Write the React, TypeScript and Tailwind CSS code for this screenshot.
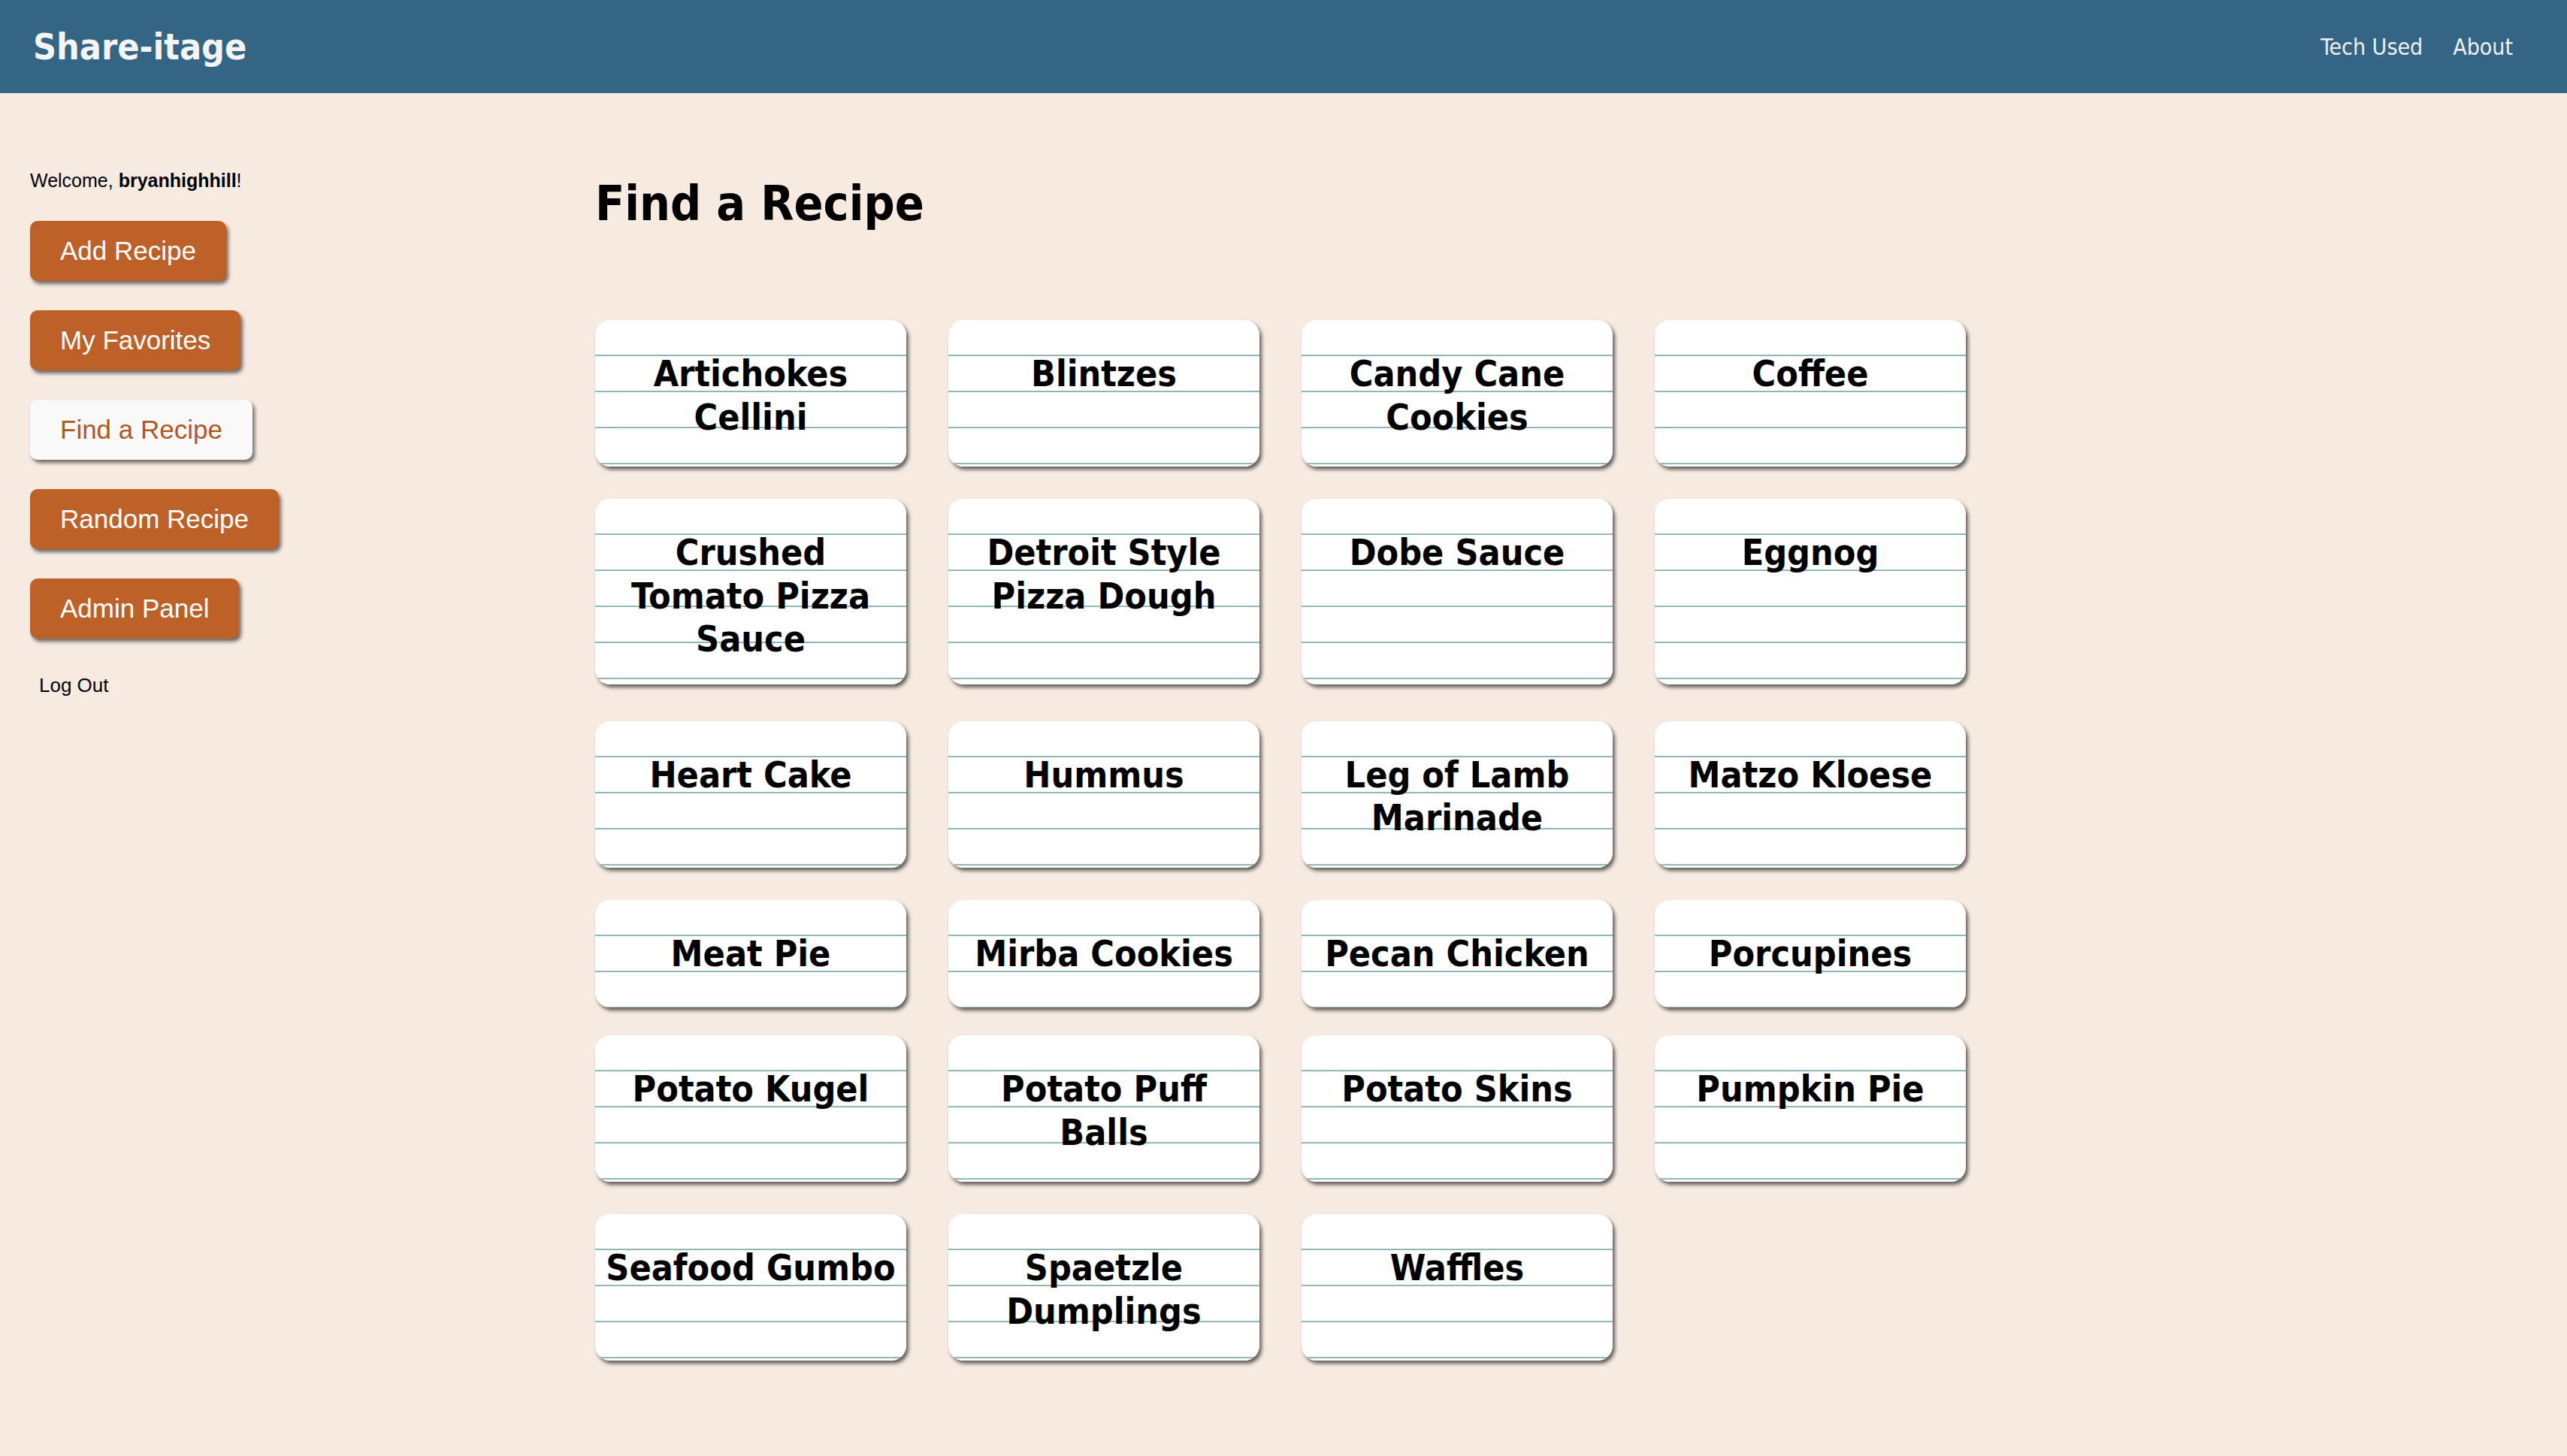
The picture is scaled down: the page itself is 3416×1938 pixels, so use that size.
import React from "react";

const recipes: string[][] = [
  ["Artichokes", "Cellini"],
  ["Blintzes"],
  ["Candy Cane", "Cookies"],
  ["Coffee"],
  ["Crushed", "Tomato Pizza", "Sauce"],
  ["Detroit Style", "Pizza Dough"],
  ["Dobe Sauce"],
  ["Eggnog"],
  ["Heart Cake"],
  ["Hummus"],
  ["Leg of Lamb", "Marinade"],
  ["Matzo Kloese"],
  ["Meat Pie"],
  ["Mirba Cookies"],
  ["Pecan Chicken"],
  ["Porcupines"],
  ["Potato Kugel"],
  ["Potato Puff", "Balls"],
  ["Potato Skins"],
  ["Pumpkin Pie"],
  ["Seafood Gumbo"],
  ["Spaetzle", "Dumplings"],
  ["Waffles"],
];

const sideButtons = [
  { label: "Add Recipe", active: false },
  { label: "My Favorites", active: false },
  { label: "Find a Recipe", active: true },
  { label: "Random Recipe", active: false },
  { label: "Admin Panel", active: false },
];

function RecipeCard({ lines }: { lines: string[] }) {
  return (
    <div className="flex flex-col">
      <div className="h-[90%] rounded-[20px] bg-[repeating-linear-gradient(to_bottom,#ffffff_0px,#ffffff_46px,#a9c9c9_46px,#78a8a8_48px)] shadow-[3px_4px_5px_rgba(0,0,0,0.6)] pt-[43px] pb-[59px] text-center text-black">
        {lines.map((l) => (
          <div
            key={l}
            className="whitespace-nowrap text-[48px] leading-[57.5px] font-bold font-['DejaVu_Sans_Condensed','DejaVu_Sans',sans-serif] [font-stretch:condensed]"
          >
            {l}
          </div>
        ))}
      </div>
    </div>
  );
}

export default function App() {
  return (
    <div className="min-h-screen bg-[#f6eae1]">
      <header className="flex h-[124px] items-center justify-between bg-[#346584] pl-[44px] pr-[72px]">
        <div className="text-[48px] font-bold text-[#f4f4f4] font-['DejaVu_Sans_Condensed','DejaVu_Sans',sans-serif] [font-stretch:condensed]">
          Share-itage
        </div>
        <nav className="flex items-center gap-[40px] text-[30px] text-[#f0f0f0] font-['DejaVu_Sans_Condensed','DejaVu_Sans',sans-serif] [font-stretch:condensed]">
          <span>Tech Used</span>
          <span>About</span>
        </nav>
      </header>
      <div className="flex">
        <aside className="flex w-[792px] shrink-0 flex-col items-start pl-[40px] pt-[102px] font-['Liberation_Sans',Arial,sans-serif]">
          <div className="text-[25px] leading-[29px] text-black">
            Welcome, <span className="font-bold">bryanhighhill</span>!
          </div>
          <div className="mt-[39px] flex flex-col items-start gap-[39px]">
            {sideButtons.map((b) => (
              <div
                key={b.label}
                className={
                  b.active
                    ? "rounded-[10px] bg-[#f9f9f9] px-[40px] py-[20px] text-[35px] leading-[40px] text-[#b3571f] shadow-[3px_4px_5px_rgba(0,0,0,0.55)]"
                    : "rounded-[10px] bg-[#be6129] px-[40px] py-[20px] text-[35px] leading-[40px] text-white shadow-[3px_4px_5px_rgba(0,0,0,0.55)]"
                }
              >
                {b.label}
              </div>
            ))}
          </div>
          <div className="ml-[12px] mt-[47px] text-[26px] leading-[30px] text-black">Log Out</div>
        </aside>
        <main className="flex-1 pt-[115px] pb-[100px]">
          <h1 className="text-[64px] leading-[64px] font-bold text-black font-['DejaVu_Sans_Condensed','DejaVu_Sans',sans-serif] [font-stretch:condensed]">
            Find a Recipe
          </h1>
          <div className="mt-[123px] grid grid-cols-[repeat(4,414px)] gap-x-[56px] gap-y-[21px]">
            {recipes.map((r) => (
              <RecipeCard key={r.join(" ")} lines={r} />
            ))}
          </div>
        </main>
      </div>
    </div>
  );
}
